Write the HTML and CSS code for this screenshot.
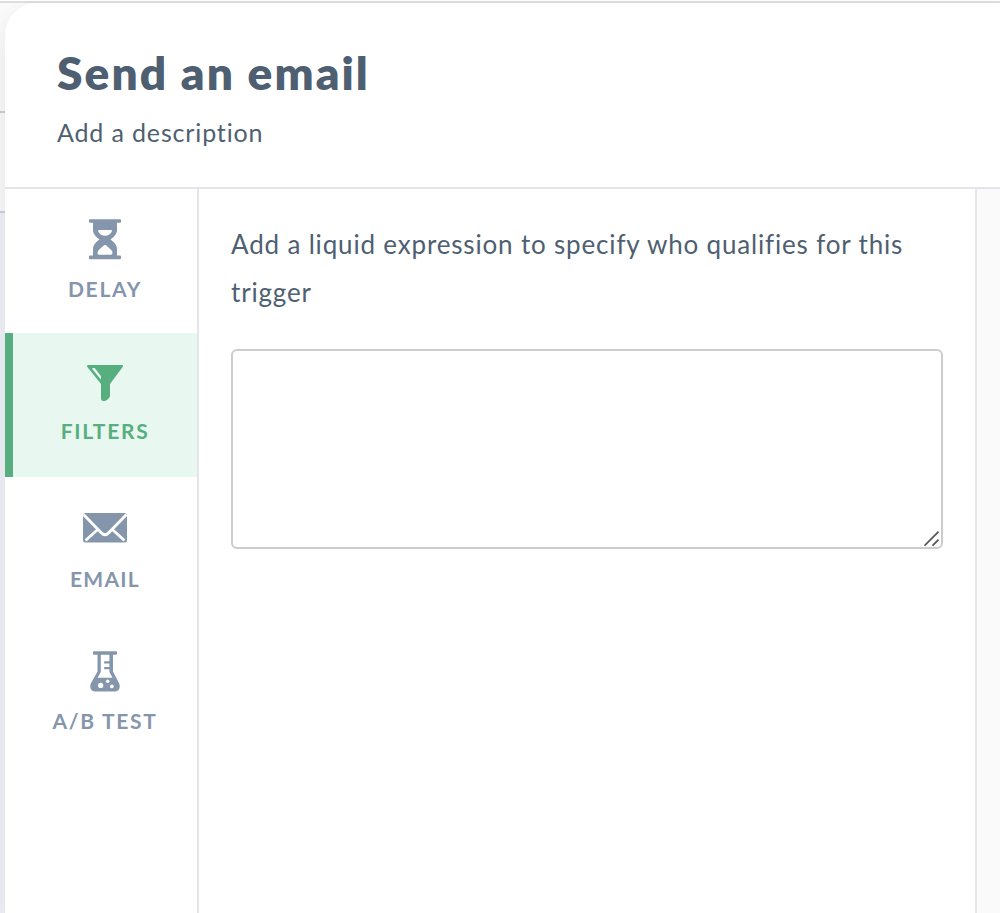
FILE: index.html
```html
<!DOCTYPE html>
<html lang="en">
<head>
    <meta charset="UTF-8">
    <meta name="viewport" content="width=device-width, initial-scale=1.0">
    <title>Send an email</title>
    <link rel="stylesheet" href="styles.css">
</head>
<body>
    <div class="backdrop">
        <div class="backdrop-top"></div>
        <div class="backdrop-row"></div>
    </div>
    <div class="panel">
        <header class="panel-header">
            <h1 class="title">Send an email</h1>
            <p class="description">Add a description</p>
        </header>
        <div class="panel-body">
            <nav class="tabs">
                <a class="tab">
                    <svg class="icon" width="44" height="44" viewBox="0 0 44 44">
                        <path fill="currentColor" fill-rule="evenodd" d="M7 2.300h30q1 0 1 1v1.500q0 1-1 1h-3V13c0 4-3 7-6.500 9.500C31 25 34 28 34 32v6.500h3q1 0 1 1V41.300q0 1-1 1H7q-1 0-1-1v-1.800q0-1 1-1h3V32c0-4 3-7 6.500-9.500C13 20 10 17 10 13V5.800H7q-1 0-1-1V3.300q0-1 1-1zM16 13h12q1.200 0 1 1c-1 3-4 4.800-7 4.800s-6-1.800-7-4.800q-.2-1 1-1zM21 28.300q1-.8 2 0l5.500 5q1 1 1 2.700 0 1.800-1.500 1.800H16q-1.500 0-1.500-1.800t1-2.700z"/>
                    </svg>
                    <span class="label">DELAY</span>
                </a>
                <a class="tab active">
                    <svg class="icon" width="44" height="44" viewBox="0 0 44 44">
                        <path fill="currentColor" d="M5 4h34q1.500 0 1 1.500L27 23v12c0 1.500-2 3-4 4.500-2 1.300-5 .5-5-2V23L4 5.500Q3.500 4 5 4z"/>
                        <path fill="#e8f7f0" d="M9.500 7h2.200l6.300 8.300v3.500L9.200 8z"/>
                    </svg>
                    <span class="label label-filters">FILTERS</span>
                </a>
                <a class="tab">
                    <svg class="icon" width="44" height="44" viewBox="0 0 44 44">
                        <rect x="0" y="8" width="44" height="29.500" rx="2.500" fill="currentColor"/>
                        <path fill="none" stroke="#fff" stroke-width="2.800" d="M0.500 9.500 18 27.500q4 4.500 8 0L43.500 9.500M2.500 35.500 15 24.300M41.500 35.500 29 24.300"/>
                    </svg>
                    <span class="label label-email">EMAIL</span>
                </a>
                <a class="tab">
                    <svg class="icon" width="44" height="44" viewBox="0 0 44 44">
                        <path fill="currentColor" fill-rule="evenodd" d="M11 2.300h22q1 0 1 1v1.500q0 1-1 1h-3V22.500l6.200 12c1.500 4-.2 8-4.200 8H12c-4 0-5.700-4-4.200-8l6.700-12V5.800H11q-1 0-1-1V3.300q0-1 1-1zM17.800 5.800V23l-3.300 5.700h15L26.400 23V20.300h-4.400q-1 0-1-1.200t1-1.200h4.400V14.600h-4.400q-1 0-1-1.200t1-1.200h4.400V5.800z"/>
                        <circle cx="17.700" cy="36.400" r="2.600" fill="#fff"/>
                        <circle cx="24.700" cy="32.200" r="1.800" fill="#fff"/>
                        <circle cx="28.800" cy="37.400" r="1.900" fill="#fff"/>
                    </svg>
                    <span class="label">A/B TEST</span>
                </a>
            </nav>
            <main class="content">
                <label class="hint" for="expression">Add a liquid expression to specify who qualifies for this<br>trigger</label>
                <div class="field">
                    <textarea class="expression" id="expression"></textarea>
                    <svg class="grip" width="16" height="16" viewBox="0 0 16 16">
                        <path d="M0.500 14.700 14.500 0.700M8.500 14.700 14.500 8.700" fill="none" stroke="#555" stroke-width="1.700"/>
                    </svg>
                </div>
            </main>
            <aside class="gutter"></aside>
        </div>
    </div>
</body>
</html>
```
FILE: styles.css
```css
* {
    box-sizing: border-box;
}
body {
    margin: 0;
    height: 913px;
    overflow: hidden;
    position: relative;
    font-family: Lato, "Liberation Sans", sans-serif;
    color: #4f5f72;
}
.backdrop {
    height: 913px;
    border-top: 1px solid #fff;
    background: #eaebf1;
}
.backdrop-top {
    height: 112px;
    border-top: 2px solid #dcdedf;
    border-bottom: 2px solid #c5c9d1;
    background: linear-gradient(#fafafa, #f2f2f2 60px);
}
.backdrop-row {
    height: 100px;
    border-bottom: 2px solid #c5c9d1;
    background: #f2f2f2;
}
.panel {
    position: absolute;
    top: 3px;
    left: 5px;
    right: 0;
    bottom: 0;
    display: flex;
    flex-direction: column;
    background: #fff;
    border-top-left-radius: 32px;
    box-shadow: 0 0 12px rgba(0, 0, 0, 0.03);
}
.panel-header {
    height: 186px;
    padding: 42px 52px 0;
    border-bottom: 2px solid #e4e4ea;
}
.title {
    margin: 0;
    font-size: 46px;
    line-height: 56px;
    font-weight: 800;
    letter-spacing: 2.05px;
    white-space: nowrap;
}
.description {
    margin: 14px 0 0;
    font-size: 25px;
    line-height: 34px;
    letter-spacing: 0.85px;
}
.panel-body {
    flex: 1;
    display: flex;
}
.tabs {
    width: 194px;
    border-right: 2px solid #e4e4ea;
}
.tab {
    display: flex;
    flex-direction: column;
    align-items: center;
    height: 144px;
    padding: 28px 0 0 8px;
    color: #8596ac;
}
.tab.active {
    padding-left: 0;
    border-left: 8px solid #57af80;
    background: #e8f7f0;
    color: #57af80;
}
.icon {
    display: block;
}
.label {
    margin-top: 13px;
    font-size: 21px;
    line-height: 30px;
    font-weight: bold;
    letter-spacing: 1.7px;
    white-space: nowrap;
}
.label-filters {
    margin-top: 11px;
}
.label-email {
    margin-top: 15px;
    letter-spacing: 1.3px;
}
.content {
    width: 776px;
    padding: 31px 32px 32px;
}
.hint {
    display: block;
    font-size: 26px;
    line-height: 48px;
    letter-spacing: 0.83px;
    white-space: nowrap;
}
.field {
    position: relative;
    width: 712px;
    height: 200px;
    margin-top: 33px;
}
.expression {
    display: block;
    width: 100%;
    height: 100%;
    padding: 12px;
    border: 2px solid #ccc;
    border-radius: 6px;
    outline: none;
    resize: none;
    background: #fff;
    font: inherit;
}
.grip {
    position: absolute;
    right: 3px;
    bottom: 2px;
}
.gutter {
    flex: 1;
    border-left: 2px solid #e6e6e6;
    background: #fafafa;
}
```
